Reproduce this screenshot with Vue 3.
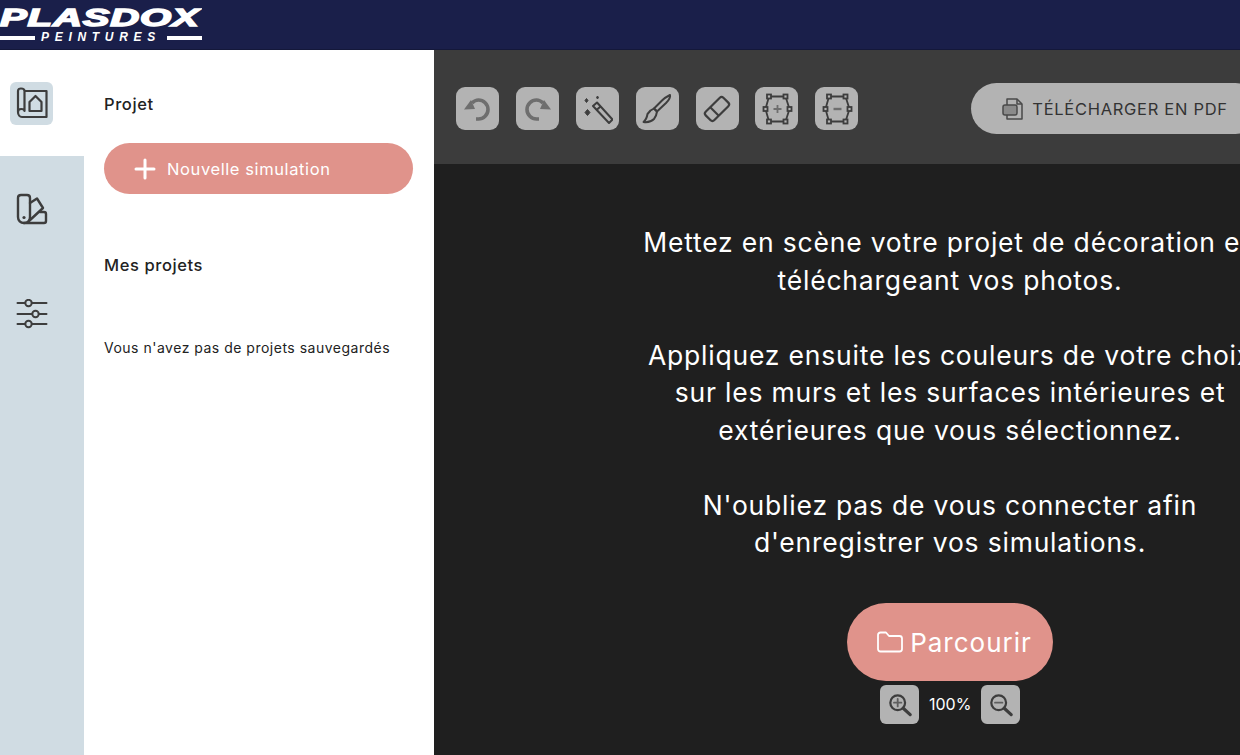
<template>
  <div class="app">
    <header class="topbar">
      <div class="logo">
        <div class="logo-name">PLASDOX</div>
        <div class="logo-sub">
          <span class="logo-line"></span>
          <span class="logo-peintures">PEINTURES</span>
          <span class="logo-line"></span>
        </div>
      </div>
    </header>

    <div class="body">
      <nav class="rail">
        <div class="tab active">
          <div class="tab-icon">
            <svg width="32" height="32" viewBox="0 0 32 32" fill="none" stroke="#3d3d3d" stroke-width="2.200" stroke-linejoin="round" stroke-linecap="round">
              <path d="M2 25V4C2 2.500 3.200 1.500 5 1.500S8.500 2.500 8.500 4V24C8.500 22.800 7 22 5.200 22 3.400 22 2 23.200 2 25 2 28 3.800 30 6 30H30.500V4H8.500" />
              <path d="M13.500 24V15L19.500 9 25.500 15V24Z" />
            </svg>
          </div>
        </div>
        <div class="tab">
          <svg width="32" height="32" viewBox="0 0 32 32" fill="none" stroke="#3d3d3d" stroke-width="2.400" stroke-linejoin="round" stroke-linecap="round">
            <path d="M2 5C2 3 3.500 2 5 2H11C13 2 14 3.500 14 5V24C14 27.500 11.500 30 8 30S2 27.500 2 24Z" />
            <path d="M14 10L21 5.500 27 15 13 28" />
            <path d="M24 19H28C29.500 19 30 20 30 21V28C30 29.500 29 30 28 30H8" />
            <circle cx="8" cy="24.500" r="1.600" fill="#3d3d3d" stroke="none" />
          </svg>
        </div>
        <div class="tab">
          <svg width="32" height="32" viewBox="0 0 32 32" fill="none" stroke="#3d3d3d" stroke-width="2" stroke-linecap="round">
            <path d="M1.500 4H9M16 4H30.500M1.500 15H16M23 15H30.500M1.500 25H9M16 25H30.500" />
            <circle cx="12.500" cy="4" r="3.200" />
            <circle cx="19.500" cy="15" r="3.200" />
            <circle cx="12.500" cy="25" r="3.200" />
          </svg>
        </div>
      </nav>

      <aside class="panel">
        <h2 class="panel-title first">Projet</h2>
        <button class="new-btn">
          <svg width="22" height="22" viewBox="0 0 22 22" stroke="#fff" stroke-width="3" stroke-linecap="round">
            <path d="M11 2V20M2 11H20" />
          </svg>
          <span>Nouvelle simulation</span>
        </button>
        <h2 class="panel-title second">Mes projets</h2>
        <p class="empty">Vous n'avez pas de projets sauvegardés</p>
      </aside>

      <main class="stage">
        <div class="toolbar">
          <div class="tools">
            <button class="tool">
              <svg width="30" height="30" viewBox="0 0 30 30" fill="none" stroke="#6e6e6e" stroke-width="3.600">
                <path d="M9 9C11 7 13 6 15.500 6 20.500 6 25 10.300 25 15.500S20.500 25 15.500 25H13" />
                <path d="M1 15.500L12 15 8 6Z" fill="#6e6e6e" stroke="none" />
              </svg>
            </button>
            <button class="tool">
              <svg width="30" height="30" viewBox="0 0 30 30" fill="none" stroke="#6e6e6e" stroke-width="3.600">
                <path d="M21 9C19 7 17 6 14.500 6 9.500 6 5 10.300 5 15.500S9.500 25 14.500 25H17" />
                <path d="M29 15.500L18 15 22 6Z" fill="#6e6e6e" stroke="none" />
              </svg>
            </button>
            <button class="tool">
              <svg width="32" height="32" viewBox="0 0 32 32" fill="none" stroke="#3d3d3d" stroke-width="2" stroke-linejoin="round">
                <path d="M12 13L16 9.500 31.500 26.500 28 30Z" />
                <path d="M15.500 17L19.500 13.500" />
                <path d="M5.500 5.500L7 7.500 5.500 9.500 4 7.500ZM6.500 16.500L9 19.500 6.500 22.500 4 19.500ZM16.500 3L17.500 4.500 16.500 6 15.500 4.500Z" fill="#3d3d3d" stroke-width="1" />
              </svg>
            </button>
            <button class="tool">
              <svg width="32" height="32" viewBox="0 0 32 32" fill="none" stroke="#3d3d3d" stroke-width="2" stroke-linejoin="round">
                <path d="M29 2C29.500 4 28 7 25 10L16 18.500 13 15.500 21 7.500C24 4.500 27 3 29 2Z" />
                <path d="M13 15.500L9.500 17.500 6.500 21C6 24 5 27 2.500 29 6 29.500 10.500 28.500 13 26L15 22.500 16 18.500Z" />
              </svg>
            </button>
            <button class="tool">
              <svg width="32" height="32" viewBox="0 0 32 32" fill="none" stroke="#3d3d3d" stroke-width="2.200" stroke-linejoin="round">
                <rect x="3.500" y="10" width="25" height="12" rx="2.500" transform="rotate(-45 16 16)" />
                <path d="M9.500 14.500L17.500 22.500" />
              </svg>
            </button>
            <button class="tool">
              <svg width="32" height="32" viewBox="0 0 32 32" fill="none" stroke="#3d3d3d" stroke-width="1.800">
                <path d="M8 3.500H24.500L28.500 16 24.500 28.500H8L4.500 16Z" />
                <rect v-for="p in polyPoints" :key="p.join()" :x="p[0] - 2" :y="p[1] - 2" width="4" height="4" fill="#b3b3b3" />
                <path d="M12.500 16H20.500M16.500 12V20" stroke="#6e6e6e" />
              </svg>
            </button>
            <button class="tool">
              <svg width="32" height="32" viewBox="0 0 32 32" fill="none" stroke="#3d3d3d" stroke-width="1.800">
                <path d="M8 3.500H24.500L28.500 16 24.500 28.500H8L4.500 16Z" />
                <rect v-for="p in polyPoints" :key="p.join()" :x="p[0] - 2" :y="p[1] - 2" width="4" height="4" fill="#b3b3b3" />
                <path d="M12.500 16H20.500" stroke="#6e6e6e" stroke-width="2.400" />
              </svg>
            </button>
          </div>
          <button class="pdf-btn">
            <svg width="22" height="24" viewBox="0 0 22 24" fill="none" stroke="#4a4a4a" stroke-width="1.500" stroke-linejoin="round">
              <path d="M5 8V2H15L20 7V22H5V18" />
              <path d="M15 2V7H20" />
              <rect x="1" y="8" width="14" height="10" rx="2" fill="#8a8a8a" />
            </svg>
            <span>TÉLÉCHARGER EN PDF</span>
          </button>
        </div>

        <div class="intro">
          <p>Mettez en scène votre projet de décoration en<br />téléchargeant vos photos.</p>
          <p>Appliquez ensuite les couleurs de votre choix<br />sur les murs et les surfaces intérieures et<br />extérieures que vous sélectionnez.</p>
          <p>N'oubliez pas de vous connecter afin<br />d'enregistrer vos simulations.</p>
          <button class="browse-btn">
            <svg width="28" height="24" viewBox="0 0 28 24" fill="none" stroke="#fff" stroke-width="1.800" stroke-linejoin="round">
              <path d="M2 5C2 3.500 3 2.500 4.500 2.500H10L13 6H23.500C25 6 26 7 26 8.500V19C26 20.500 25 21.500 23.500 21.500H4.500C3 21.500 2 20.500 2 19Z" />
            </svg>
            <span>Parcourir</span>
          </button>
          <div class="zoom-row">
            <button class="zoom-btn">
              <svg width="24" height="24" viewBox="0 0 26 26" fill="none" stroke="#3d3d3d" stroke-width="2.400" stroke-linecap="round">
                <circle cx="10.500" cy="10.500" r="8" />
                <path d="M16.500 16.500L24 23.500" stroke-width="3.400" />
                <path d="M6.500 10.500H14.500M10.500 6.500V14.500" stroke="#5e5e5e" stroke-width="2" />
              </svg>
            </button>
            <span class="zoom-value">100%</span>
            <button class="zoom-btn">
              <svg width="24" height="24" viewBox="0 0 26 26" fill="none" stroke="#3d3d3d" stroke-width="2.400" stroke-linecap="round">
                <circle cx="10.500" cy="10.500" r="8" />
                <path d="M16.500 16.500L24 23.500" stroke-width="3.400" />
                <path d="M6.500 10.500H14.500" stroke="#5e5e5e" stroke-width="2" />
              </svg>
            </button>
          </div>
        </div>
      </main>
    </div>
  </div>
</template>

<script setup>
// sommets du polygone des outils de sélection
const polyPoints = [[8, 3.5], [24.5, 3.5], [4.5, 16], [28.5, 16], [8, 28.5], [24.5, 28.5]]
</script>

<style>
html, body {
  margin: 0;
  background: #fff;
}
</style>

<style scoped>
.app {
  width: 1240px;
  height: 755px;
  overflow: hidden;
  display: flex;
  flex-direction: column;
  font-family: "Inter", "DejaVu Sans", sans-serif;
}

.topbar {
  height: 50px;
  flex: none;
  background: #1a1f4a;
  border-bottom: 1px solid #14183a;
  box-sizing: border-box;
}

.logo {
  width: 202px;
  padding-top: 7px;
  color: #fff;
  overflow: hidden;
}

.logo-name {
  font-family: "Liberation Sans", sans-serif;
  font-weight: 700;
  font-style: italic;
  font-size: 23px;
  line-height: 22px;
  letter-spacing: 0.5px;
  transform: scaleX(1.74);
  transform-origin: left center;
  -webkit-text-stroke: 1.4px #fff;
  white-space: nowrap;
}

.logo-sub {
  display: flex;
  align-items: center;
  gap: 6px;
  margin-top: 3px;
}

.logo-line {
  flex: 1;
  height: 4px;
  background: #fff;
}

.logo-peintures {
  font-family: "Liberation Sans", sans-serif;
  font-weight: 700;
  font-style: italic;
  font-size: 12px;
  line-height: 11px;
  letter-spacing: 5.700px;
}

.body {
  flex: 1;
  display: flex;
  min-height: 0;
}

.rail {
  width: 84px;
  flex: none;
  background: #d0dce3;
}

.tab {
  height: 106px;
  display: flex;
  align-items: center;
  justify-content: center;
  padding-right: 21px;
  box-sizing: border-box;
}

.tab.active {
  background: #fff;
}

.tab-icon {
  width: 43px;
  height: 43px;
  border-radius: 6px;
  background: #d0dce3;
  display: flex;
  align-items: center;
  justify-content: center;
}

.panel {
  width: 350px;
  flex: none;
  box-sizing: border-box;
  padding: 44px 21px 0 20px;
  background: #fff;
  color: #222;
}

.panel-title {
  margin: 0;
  font-size: 16.500px;
  line-height: 20px;
  font-weight: 500;
  letter-spacing: 0.6px;
}

.second {
  margin-top: 61px;
}

.new-btn {
  width: 309px;
  height: 51px;
  margin-top: 29px;
  display: flex;
  align-items: center;
  gap: 11px;
  padding: 0 0 0 30px;
  border: none;
  border-radius: 26px;
  background: #e0938b;
  color: #fff;
  font-family: inherit;
  font-size: 16.500px;
  letter-spacing: 0.6px;
}

.empty {
  margin: 64px 0 0;
  font-size: 14px;
  line-height: 18px;
  letter-spacing: 0.5px;
  color: #222;
}

.stage {
  flex: 1;
  min-width: 0;
  background: #1f1f1f;
  overflow: hidden;
}

.toolbar {
  width: 1032px;
  height: 114px;
  background: #3c3c3c;
  box-sizing: border-box;
  padding: 33px 0 0 22px;
  display: flex;
  align-items: flex-start;
}

.tools {
  display: flex;
  gap: 16.900px;
  margin-top: 4px;
}

.tool {
  width: 43px;
  height: 43px;
  flex: none;
  padding: 0;
  border: none;
  border-radius: 9px;
  background: #b3b3b3;
  display: flex;
  align-items: center;
  justify-content: center;
}

.pdf-btn {
  width: 290px;
  height: 51px;
  margin-left: 113px;
  flex: none;
  display: flex;
  align-items: center;
  gap: 8px;
  padding: 0 0 0 31px;
  border: none;
  border-radius: 26px;
  background: #b3b3b3;
  color: #333;
  font-family: inherit;
  font-size: 16.500px;
  letter-spacing: 0.7px;
  white-space: nowrap;
}

.intro {
  width: 1032px;
  margin-top: 60px;
  text-align: center;
  color: #fff;
  font-size: 26.500px;
  line-height: 37.500px;
  letter-spacing: 0.8px;
}

.intro p {
  margin: 0 0 37.500px;
  white-space: nowrap;
}

.browse-btn {
  width: 206px;
  height: 78px;
  margin-top: 4px;
  display: inline-flex;
  align-items: center;
  justify-content: center;
  gap: 6px;
  padding: 0 0 0 8px;
  border: none;
  border-radius: 39px;
  background: #e0938b;
  color: #fff;
  font-family: inherit;
  font-size: 26px;
  letter-spacing: 1px;
}

.zoom-row {
  display: flex;
  justify-content: center;
  align-items: center;
  gap: 10px;
  margin-top: 4px;
}

.zoom-btn {
  width: 39px;
  height: 39px;
  padding: 0;
  border: none;
  border-radius: 6px;
  background: #b3b3b3;
  display: flex;
  align-items: center;
  justify-content: center;
}

.zoom-value {
  width: 42px;
  font-size: 16px;
  line-height: 39px;
  letter-spacing: 0;
}
</style>
